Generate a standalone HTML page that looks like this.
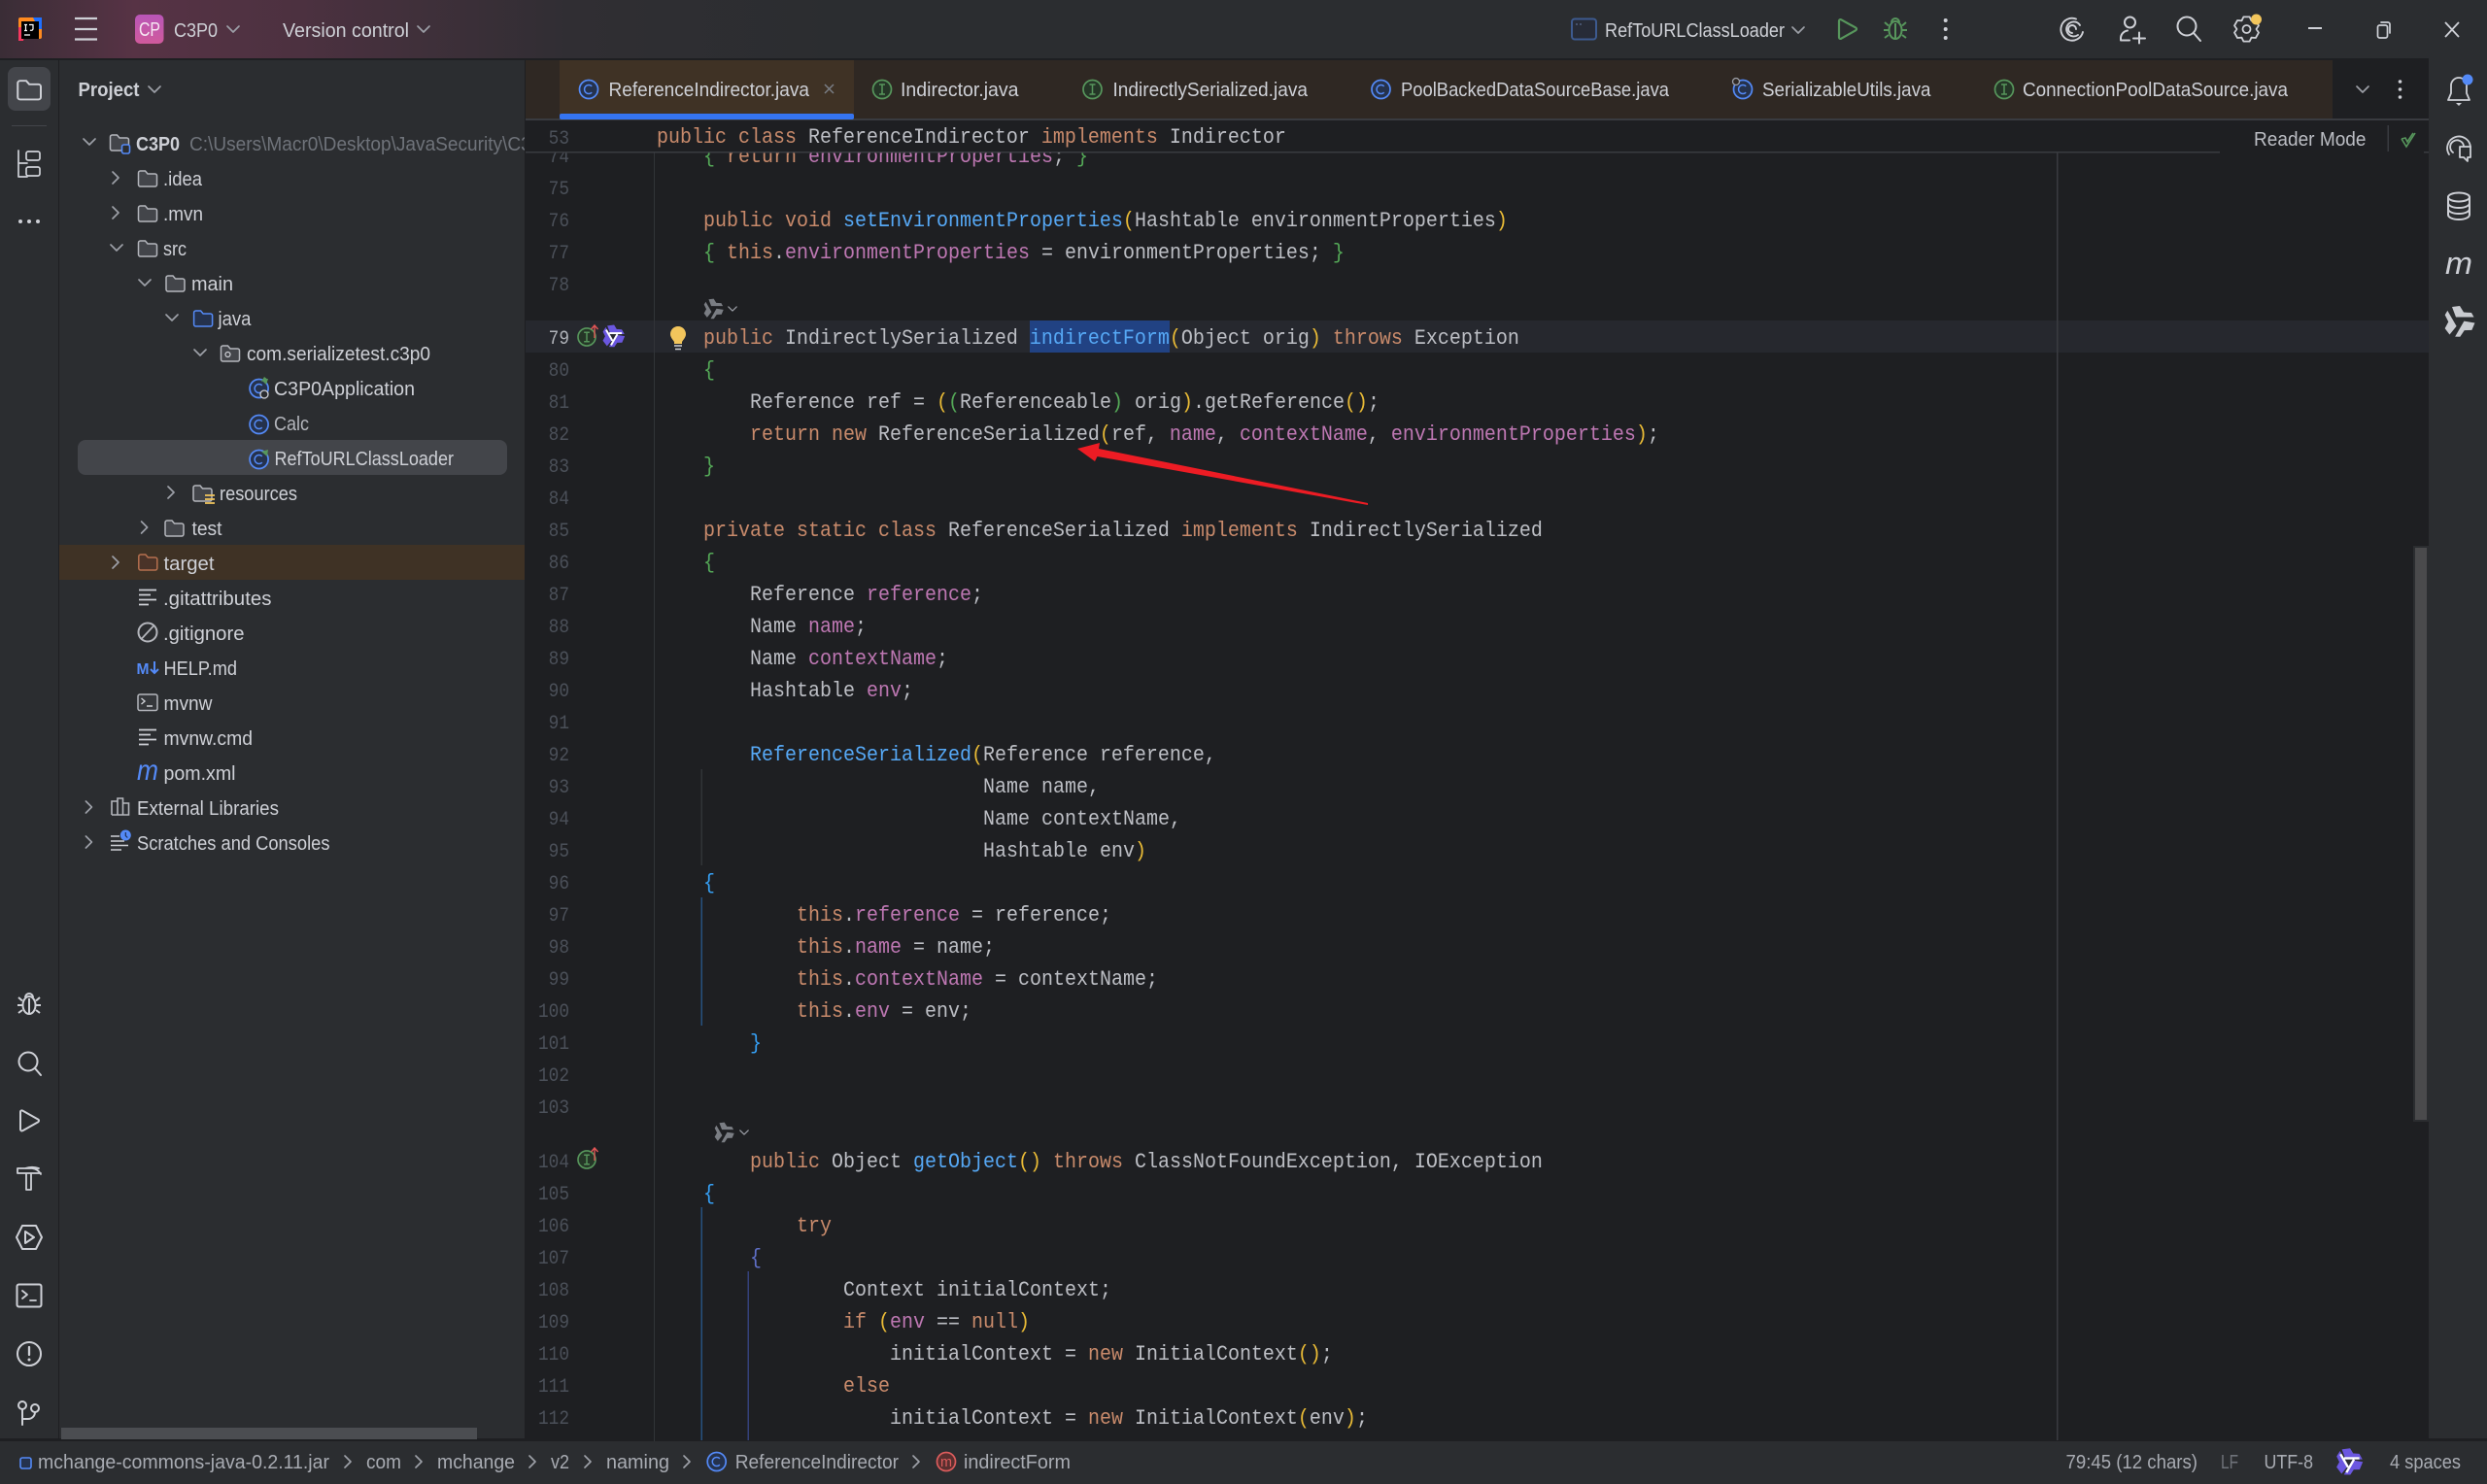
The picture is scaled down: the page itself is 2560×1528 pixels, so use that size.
<!DOCTYPE html>
<html><head><meta charset="utf-8"><title>C3P0</title>
<style>
html,body{margin:0;padding:0;background:#1e1f22;width:2560px;height:1528px;overflow:hidden}
svg{display:block;position:absolute;left:0;top:0}
text{white-space:pre}
.u{font:20px "Liberation Sans",sans-serif;fill:#ced0d6}
.b{font-weight:bold}
.d{fill:#a8abb2}
.c{font:22px "Liberation Mono",monospace;fill:#bcbec4}
.n{font:20px "Liberation Mono",monospace;fill:#4b5059;text-anchor:end}
.k{fill:#c88a6b}.f{fill:#bd77b2}.m{fill:#56a8f5}.y{fill:#e8ba36}.g{fill:#54a857}.l{fill:#359ff4}.p{fill:#5f6fc7}
.s{fill:none;stroke:#ced0d6;stroke-width:2;stroke-linecap:round;stroke-linejoin:round}
.ch{fill:none;stroke:#9da0a8;stroke-width:1.7;stroke-linecap:round;stroke-linejoin:round}
</style></head><body>
<svg width="2560" height="1528" viewBox="0 0 2560 1528" xmlns="http://www.w3.org/2000/svg">
<defs>
<linearGradient id="tg" x1="0" x2="1" y1="0" y2="0"><stop offset="0" stop-color="#3a2d36"/><stop offset=".16" stop-color="#573345"/><stop offset=".36" stop-color="#4c3140"/><stop offset=".68" stop-color="#302e33"/><stop offset="1" stop-color="#2b2d30"/></linearGradient>
<linearGradient id="cp" x1="0" x2="0" y1="0" y2="1"><stop offset="0" stop-color="#b956b8"/><stop offset="1" stop-color="#d05a9c"/></linearGradient>
<clipPath id="pc"><rect x="60" y="120" width="480" height="60"/></clipPath>
<clipPath id="ed"><rect x="541" y="157" width="1959" height="1327"/></clipPath>
<path id="fo" d="M1 3a2 2 0 0 1 2-2h5l2.500 3H18a2 2 0 0 1 2 2v9a2 2 0 0 1-2 2H3a2 2 0 0 1-2-2z"/>
<g id="cl"><circle r="9.500" fill="#25324d" stroke="#548af7" stroke-width="1.700"/><path d="M3.200-3.200a4.500 4.500 0 1 0 0 6.400" fill="none" stroke="#548af7" stroke-width="1.500"/></g>
<g id="if"><circle r="9.500" fill="#253627" stroke="#57965c" stroke-width="1.700"/><path d="M-3-5h6M-3 5h6M0-5v10" fill="none" stroke="#57965c" stroke-width="1.500"/></g>
<path id="dn" d="M-6-3L0 3L6-3"/>
<path id="rt" d="M-3-6L3 0L-3 6"/>
<path id="ar" d="M-7-15L1-16L5-9.500L13-9L15.500-4.500L-3-4.500Z"/>
<g id="st"><use href="#ar"/><use href="#ar" transform="rotate(120)"/><use href="#ar" transform="rotate(240)"/></g>
<path id="al" d="M-6-4.500H14"/>
<g id="sl"><use href="#al"/><use href="#al" transform="rotate(120)"/><use href="#al" transform="rotate(240)"/></g>
<g id="bug"><ellipse cx="0" cy="2" rx="6.500" ry="9"/><path d="M-4-6a4 4 0 0 1 8 0M-11-6l4 3.500M11-6l-4 3.500M-12 2h5M12 2h-5M-11 10l4-3M11 10l-4-3M0-5v16"/></g>
<g id="lines"><path d="M-9-7.500H9M-9-2.500H3M-9 2.500H9M-9 7.500H1" fill="none" stroke="#ced0d6" stroke-width="1.800"/></g>
</defs>

<!-- base panels -->
<rect width="2560" height="1528" fill="#1e1f22"/>
<rect width="2560" height="60" fill="#2b2d30"/>
<rect width="860" height="60" fill="url(#tg)"/>
<rect y="60" width="2560" height="2" fill="#1e1f22"/>
<rect y="62" width="60" height="1422" fill="#2b2d30"/>
<rect x="61" y="62" width="479" height="1422" fill="#2b2d30"/>
<rect x="60" y="60" width="1" height="1424" fill="#1e1f22"/>
<rect x="540" y="60" width="1" height="1424" fill="#1e1f22"/>
<rect x="2500" y="60" width="60" height="1424" fill="#2b2d30"/>
<rect y="1481" width="2560" height="3" fill="#1e1f22"/>
<rect y="1484" width="2560" height="44" fill="#2b2d30"/>

<!-- title bar -->
<rect x="19" y="18" width="24" height="22" rx="2" fill="#ff8a1f"/>
<path d="M34 18h9v12h-3z" fill="#1f6fff"/>
<path d="M19 28h8l-3 14h-5z" fill="#f5385f"/>
<rect x="22" y="22" width="18" height="18" fill="#000"/>
<path d="M25 25.500h3M26.500 25.500v6M25 31.500h3M30 25.500h4v4.500a2 2 0 0 1-3 1M25 36h6" fill="none" stroke="#fff" stroke-width="1.200"/>
<path d="M77 19h23M77 30h23M77 40.500h23" stroke="#ced0d6" stroke-width="2.200"/>
<rect x="139" y="15" width="29.500" height="30" rx="5" fill="url(#cp)"/>
<text class="u" x="143" y="37" textLength="22" lengthAdjust="spacingAndGlyphs" style="fill:#f6e6f2;font-size:20px">CP</text>
<text class="u" x="179" y="38" textLength="45" lengthAdjust="spacingAndGlyphs">C3P0</text>
<use href="#dn" x="240" y="30" class="ch"/>
<text class="u" x="291" y="38" textLength="130" lengthAdjust="spacingAndGlyphs">Version control</text>
<use href="#dn" x="436" y="30" class="ch"/>
<rect x="1618" y="19.500" width="25" height="21" rx="3" fill="#272b37" stroke="#3d5a8f" stroke-width="2"/>
<path d="M1622 25h2M1626 25h2" stroke="#5a6a8f" stroke-width="1.200"/>
<text class="u" x="1652" y="38" textLength="185" lengthAdjust="spacingAndGlyphs">RefToURLClassLoader</text>
<use href="#dn" x="1851" y="31" class="ch"/>
<path d="M1893 21.500v17a1.500 1.500 0 0 0 2.300 1.200l15-8.500a1.500 1.500 0 0 0 0-2.600l-15-8.300a1.500 1.500 0 0 0-2.300 1.200z" fill="none" stroke="#57965c" stroke-width="2.200"/>
<use href="#bug" x="1951" y="29" fill="none" stroke="#57965c" stroke-width="2"/>
<g fill="#ced0d6"><circle cx="2002.700" cy="21" r="2"/><circle cx="2002.700" cy="30" r="2"/><circle cx="2002.700" cy="39" r="2"/></g>
<path d="M2137 19.500A11.500 11.500 0 1 0 2144 33M2141 26A7.500 7.500 0 1 0 2139 36M2137 30a4 4 0 1 0-4 4" class="s" style="stroke-width:1.900"/>
<circle cx="2192.500" cy="23" r="5.500" class="s"/>
<path d="M2183 41.500v-2a8 8 0 0 1 7-8M2183 41.500h9M2202 33.500v11M2196 39.500h12" class="s"/>
<circle cx="2251" cy="27" r="9.500" class="s"/><path d="M2258 34l7 8" class="s"/>
<polygon transform="translate(2312.500,30)" points="-3.100,-12.600 3.100,-12.600 5,-8.700 9.400,-9 12.500,-3.600 10,0 12.500,3.600 9.400,9 5,8.700 3.100,12.600 -3.100,12.600 -5,8.700 -9.400,9 -12.500,3.600 -10,0 -12.500,-3.600 -9.400,-9 -5,-8.700" class="s" style="stroke-width:1.800"/><circle cx="2312.500" cy="30" r="4" class="s" style="stroke-width:1.800"/>
<circle cx="2322.500" cy="20" r="5.500" fill="#f2c55c"/>
<path d="M2376 29h14" stroke="#ced0d6" stroke-width="2"/>
<rect x="2447.500" y="26" width="10" height="13" rx="2" class="s" style="stroke-width:1.700"/><path d="M2451 23h7a2 2 0 0 1 2 2v9" class="s" style="stroke-width:1.700"/>
<path d="M2517 23l14 15M2531 23l-14 15" stroke="#ced0d6" stroke-width="1.800"/>

<!-- left bar -->
<rect x="8" y="69" width="44" height="45" rx="8" fill="#43454a"/>
<use href="#fo" x="0" y="0" transform="translate(17,82) scale(1.250,1.200)" fill="none" stroke="#ced0d6" stroke-width="1.600"/>
<rect x="12" y="129" width="36" height="1" fill="#43454a"/>
<path d="M19 155v27h9M19 168h9" class="s" style="stroke-width:1.700"/><rect x="27" y="156" width="14" height="9" rx="2" class="s" style="stroke-width:1.700"/><rect x="27" y="172" width="14" height="9" rx="2" class="s" style="stroke-width:1.700"/>
<g fill="#ced0d6"><circle cx="21" cy="228" r="2"/><circle cx="30" cy="228" r="2"/><circle cx="39" cy="228" r="2"/></g>
<use href="#bug" x="30" y="1033" fill="none" stroke="#ced0d6" stroke-width="2"/>
<circle cx="29" cy="1093" r="9.500" class="s"/><path d="M36 1100l6 7" class="s"/>
<path d="M21 1145v18a1.500 1.500 0 0 0 2.300 1.200l16-9a1.500 1.500 0 0 0 0-2.600l-16-9a1.500 1.500 0 0 0-2.300 1.200z" class="s"/>
<path d="M18 1203h22a16 12 0 0 0-14 0M18 1203v5h24M27 1208v17h5v-17M33 1203a12 10 0 0 1 9 6" class="s" style="stroke-width:1.800"/>
<path d="M23 1262h14l6 12-6 12H23l-6-12z" class="s"/><path d="M26 1268v12l9-6z" class="s"/>
<rect x="17.500" y="1322.500" width="25" height="23" rx="2" class="s"/><path d="M23 1329l5 4-5 4M31 1339h6" class="s" style="stroke-width:1.800"/>
<circle cx="30" cy="1394" r="12" class="s"/><path d="M30 1387v8" class="s" style="stroke-width:2.300"/><circle cx="30" cy="1400" r="1.500" fill="#ced0d6"/>
<circle cx="23" cy="1447" r="4" class="s"/><circle cx="36" cy="1450" r="4" class="s"/><path d="M23 1451v16M23 1461h6a7 7 0 0 0 7-7" class="s"/>

<!-- project panel -->
<text class="u b" x="80.500" y="99" textLength="63" lengthAdjust="spacingAndGlyphs">Project</text>
<use href="#dn" x="159" y="92" class="ch"/>
<rect x="61" y="561" width="479" height="36" fill="#3f3225"/>
<rect x="80" y="453" width="442" height="36" rx="8" fill="#43454a"/>
<g class="ch">
<use href="#dn" x="92" y="146"/><use href="#rt" x="119" y="183"/><use href="#rt" x="119" y="219"/><use href="#dn" x="120" y="255"/><use href="#dn" x="149" y="291"/><use href="#dn" x="177" y="327"/><use href="#dn" x="206" y="363"/><use href="#rt" x="176" y="507"/><use href="#rt" x="148.600" y="543"/><use href="#rt" x="119" y="579"/><use href="#rt" x="91.400" y="831"/><use href="#rt" x="91.400" y="867"/>
</g>
<g fill="#43454a" stroke="#b4b6bc" stroke-width="1.500">
<use href="#fo" x="112.500" y="138"/><use href="#fo" x="141.500" y="175"/><use href="#fo" x="141.500" y="211"/><use href="#fo" x="141.500" y="247"/><use href="#fo" x="170" y="283"/><use href="#fo" x="226.500" y="355"/><use href="#fo" x="198" y="499"/><use href="#fo" x="169" y="535"/>
</g>
<use href="#fo" x="198.600" y="319" fill="#25324d" stroke="#548af7" stroke-width="1.500"/>
<use href="#fo" x="141.800" y="570" fill="#4a3328" stroke="#b5704f" stroke-width="1.500"/>
<rect x="125.500" y="149" width="8" height="9" rx="2" fill="#2b2d30" stroke="#548af7" stroke-width="1.600"/>
<circle cx="234.500" cy="365" r="2.500" fill="none" stroke="#ced0d6" stroke-width="1.200"/>
<path d="M211 510h10M211 514h10M211 518h10" stroke="#f2c55c" stroke-width="1.800"/>
<text class="u b" x="140" y="155" textLength="45" lengthAdjust="spacingAndGlyphs">C3P0</text>
<g clip-path="url(#pc)"><text class="u" x="195" y="155" textLength="375" lengthAdjust="spacingAndGlyphs" style="fill:#6f737a">C:\Users\Macr0\Desktop\JavaSecurity\C3P0</text></g>
<text class="u" x="168" y="191" textLength="40" lengthAdjust="spacingAndGlyphs">.idea</text>
<text class="u" x="168" y="227" textLength="41" lengthAdjust="spacingAndGlyphs">.mvn</text>
<text class="u" x="168" y="263" textLength="24" lengthAdjust="spacingAndGlyphs">src</text>
<text class="u" x="197" y="299" textLength="43" lengthAdjust="spacingAndGlyphs">main</text>
<text class="u" x="224.500" y="335" textLength="34" lengthAdjust="spacingAndGlyphs">java</text>
<text class="u" x="254" y="371" textLength="189" lengthAdjust="spacingAndGlyphs">com.serializetest.c3p0</text>
<use href="#cl" x="266.600" y="400"/><path d="M269 393l3-5 4 3z M269 391l7-1-2 6z" fill="#57965c"/><circle cx="272" cy="406" r="4" fill="#2b2d30" stroke="#ced0d6" stroke-width="1.300"/>
<text class="u" x="282" y="407" textLength="145" lengthAdjust="spacingAndGlyphs">C3P0Application</text>
<use href="#cl" x="266.600" y="437"/>
<text class="u" x="282" y="443" textLength="36" lengthAdjust="spacingAndGlyphs" style="fill:#b4b6bc">Calc</text>
<use href="#cl" x="266.600" y="473"/><path d="M269 465l7-2-1 7z" fill="#57965c"/>
<text class="u" x="282.500" y="479" textLength="184.500" lengthAdjust="spacingAndGlyphs">RefToURLClassLoader</text>
<text class="u" x="226" y="515" textLength="80" lengthAdjust="spacingAndGlyphs">resources</text>
<text class="u" x="197.500" y="551" textLength="31" lengthAdjust="spacingAndGlyphs">test</text>
<text class="u" x="168.500" y="587" textLength="52" lengthAdjust="spacingAndGlyphs">target</text>
<use href="#lines" x="152" y="615"/>
<text class="u" x="168" y="623" textLength="111.500" lengthAdjust="spacingAndGlyphs">.gitattributes</text>
<circle cx="152" cy="651" r="9.500" class="s" style="stroke:#b4b6bc"/><path d="M145.500 658l13-14" class="s" style="stroke:#b4b6bc;stroke-width:1.700"/>
<text class="u" x="168" y="659" textLength="83.500" lengthAdjust="spacingAndGlyphs">.gitignore</text>
<text class="u b" x="140.500" y="694" textLength="13" lengthAdjust="spacingAndGlyphs" style="fill:#548af7;font-size:16px">M</text>
<path d="M159 681v12M155 689l4 4 4-4" fill="none" stroke="#548af7" stroke-width="2"/>
<text class="u" x="168.500" y="695" textLength="75.500" lengthAdjust="spacingAndGlyphs">HELP.md</text>
<rect x="142" y="715" width="20" height="16.500" rx="2" fill="#35373b" stroke="#b4b6bc" stroke-width="1.500"/><path d="M145.500 719l3.500 3-3.500 3M151 727h6" fill="none" stroke="#ced0d6" stroke-width="1.400"/>
<text class="u" x="168.500" y="731" textLength="50" lengthAdjust="spacingAndGlyphs">mvnw</text>
<use href="#lines" x="152" y="759"/>
<text class="u" x="168.500" y="767" textLength="91.500" lengthAdjust="spacingAndGlyphs">mvnw.cmd</text>
<text x="141" y="803" textLength="22" lengthAdjust="spacingAndGlyphs" style="font:italic 30px 'Liberation Sans',sans-serif;fill:#548af7">m</text>
<text class="u" x="168.500" y="803" textLength="74" lengthAdjust="spacingAndGlyphs">pom.xml</text>
<path d="M115 839v-14h6v14M121 839v-17h5.500v17M126.500 839v-12h6v12zM115 839h17" fill="none" stroke="#b4b6bc" stroke-width="1.600"/>
<text class="u" x="141" y="839" textLength="146" lengthAdjust="spacingAndGlyphs">External Libraries</text>
<path d="M114 861h9M114 866h14M114 870.500h18M114 875h11" fill="none" stroke="#ced0d6" stroke-width="1.600"/><circle cx="129.300" cy="860" r="5.500" fill="#548af7"/><path d="M129.300 857v3.500l2 2" fill="none" stroke="#1e2f55" stroke-width="1.200"/>
<text class="u" x="141" y="875" textLength="198.500" lengthAdjust="spacingAndGlyphs">Scratches and Consoles</text>
<rect x="63" y="1470" width="428" height="12" fill="#4b4d51"/>

<!-- tabs -->
<rect x="541" y="62" width="1860" height="60" fill="#2f2823"/>
<rect x="576" y="62" width="303" height="60" fill="#3f3225"/>
<rect x="541" y="122" width="1959" height="2" fill="#393b40"/>
<rect x="576" y="117" width="303" height="6" rx="2" fill="#3574f0"/>
<use href="#cl" x="606" y="92"/>
<text class="u" x="626.500" y="99" textLength="206.500" lengthAdjust="spacingAndGlyphs">ReferenceIndirector.java</text>
<path d="M849 87l9 9M858 87l-9 9" stroke="#7a7e85" stroke-width="1.500"/>
<use href="#if" x="908" y="92"/>
<text class="u" x="927" y="99" textLength="121.500" lengthAdjust="spacingAndGlyphs">Indirector.java</text>
<use href="#if" x="1124.500" y="92"/>
<text class="u" x="1145.500" y="99" textLength="200.500" lengthAdjust="spacingAndGlyphs">IndirectlySerialized.java</text>
<use href="#cl" x="1421.500" y="92"/>
<text class="u" x="1442" y="99" textLength="276" lengthAdjust="spacingAndGlyphs">PoolBackedDataSourceBase.java</text>
<use href="#cl" x="1794" y="92"/><circle cx="1787" cy="84" r="3.500" fill="#2f2823" stroke="#9da0a8" stroke-width="1.300"/>
<text class="u" x="1814" y="99" textLength="173.500" lengthAdjust="spacingAndGlyphs">SerializableUtils.java</text>
<use href="#if" x="2063" y="92"/>
<text class="u" x="2082" y="99" textLength="273" lengthAdjust="spacingAndGlyphs">ConnectionPoolDataSource.java</text>
<use href="#dn" x="2432" y="92" class="ch"/>
<g fill="#ced0d6"><circle cx="2470.500" cy="84" r="1.800"/><circle cx="2470.500" cy="92" r="1.800"/><circle cx="2470.500" cy="100" r="1.800"/></g>

<!-- editor backgrounds & guides -->
<rect x="541" y="330" width="1959" height="33" fill="#26282e"/>
<rect x="673" y="124" width="1" height="1360" fill="#313438"/>
<rect x="2117" y="157" width="1.500" height="1326" fill="#393b40"/>
<rect x="1060" y="330" width="144" height="33" fill="#214283"/>
<rect x="721.500" y="792" width="1.500" height="99" fill="#313438"/>
<rect x="721.500" y="924" width="1.500" height="132" fill="#27527f"/>
<rect x="721.500" y="1243" width="1.500" height="240" fill="#27527f"/>
<rect x="769.500" y="1309" width="1.500" height="174" fill="#34407a"/>

<!-- line numbers -->
<g clip-path="url(#ed)">
<text class="n" transform="translate(586,167) scale(.889 1)">74</text>
<text class="c" transform="translate(724,167) scale(.90909 1)"><tspan class="g">{</tspan> <tspan class="k">return</tspan> <tspan class="f">environmentProperties</tspan>; <tspan class="g">}</tspan></text>
</g>
<text class="n" transform="translate(586,200) scale(.889 1)">75</text>
<text class="n" transform="translate(586,233) scale(.889 1)">76</text>
<text class="n" transform="translate(586,266) scale(.889 1)">77</text>
<text class="n" transform="translate(586,299) scale(.889 1)">78</text>
<text class="n" transform="translate(586,354) scale(.889 1)" style="fill:#b0b3b9">79</text>
<text class="n" transform="translate(586,387) scale(.889 1)">80</text>
<text class="n" transform="translate(586,420) scale(.889 1)">81</text>
<text class="n" transform="translate(586,453) scale(.889 1)">82</text>
<text class="n" transform="translate(586,486) scale(.889 1)">83</text>
<text class="n" transform="translate(586,519) scale(.889 1)">84</text>
<text class="n" transform="translate(586,552) scale(.889 1)">85</text>
<text class="n" transform="translate(586,585) scale(.889 1)">86</text>
<text class="n" transform="translate(586,618) scale(.889 1)">87</text>
<text class="n" transform="translate(586,651) scale(.889 1)">88</text>
<text class="n" transform="translate(586,684) scale(.889 1)">89</text>
<text class="n" transform="translate(586,717) scale(.889 1)">90</text>
<text class="n" transform="translate(586,750) scale(.889 1)">91</text>
<text class="n" transform="translate(586,783) scale(.889 1)">92</text>
<text class="n" transform="translate(586,816) scale(.889 1)">93</text>
<text class="n" transform="translate(586,849) scale(.889 1)">94</text>
<text class="n" transform="translate(586,882) scale(.889 1)">95</text>
<text class="n" transform="translate(586,915) scale(.889 1)">96</text>
<text class="n" transform="translate(586,948) scale(.889 1)">97</text>
<text class="n" transform="translate(586,981) scale(.889 1)">98</text>
<text class="n" transform="translate(586,1014) scale(.889 1)">99</text>
<text class="n" transform="translate(586,1047) scale(.889 1)">100</text>
<text class="n" transform="translate(586,1080) scale(.889 1)">101</text>
<text class="n" transform="translate(586,1113) scale(.889 1)">102</text>
<text class="n" transform="translate(586,1146) scale(.889 1)">103</text>
<text class="n" transform="translate(586,1202) scale(.889 1)">104</text>
<text class="n" transform="translate(586,1235) scale(.889 1)">105</text>
<text class="n" transform="translate(586,1268) scale(.889 1)">106</text>
<text class="n" transform="translate(586,1301) scale(.889 1)">107</text>
<text class="n" transform="translate(586,1334) scale(.889 1)">108</text>
<text class="n" transform="translate(586,1367) scale(.889 1)">109</text>
<text class="n" transform="translate(586,1400) scale(.889 1)">110</text>
<text class="n" transform="translate(586,1433) scale(.889 1)">111</text>
<text class="n" transform="translate(586,1466) scale(.889 1)">112</text>

<!-- sticky line -->
<rect x="541" y="124" width="1959" height="32" fill="#1e1f22"/>
<rect x="541" y="156" width="1744" height="1.500" fill="#393b40"/>
<rect x="2495" y="156" width="5" height="1.500" fill="#393b40"/>
<text class="n" transform="translate(586,148) scale(.889 1)">53</text>
<text class="c" transform="translate(676,147) scale(.90909 1)"><tspan class="k">public class</tspan> ReferenceIndirector <tspan class="k">implements</tspan> Indirector</text>
<text class="u" x="2320" y="150" textLength="115.500" lengthAdjust="spacingAndGlyphs" style="fill:#bcbec4">Reader Mode</text>
<rect x="2457.500" y="129" width="1.500" height="27" fill="#393b40"/>
<path d="M2472 143l5 8 9-14M2472 143l4-1 2 4 6-9" fill="none" stroke="#57965c" stroke-width="1.600"/>

<!-- code -->
<text class="c" transform="translate(724,233) scale(.90909 1)"><tspan class="k">public void</tspan> <tspan class="m">setEnvironmentProperties</tspan><tspan class="y">(</tspan>Hashtable environmentProperties<tspan class="y">)</tspan></text>
<text class="c" transform="translate(724,266) scale(.90909 1)"><tspan class="g">{</tspan> <tspan class="k">this</tspan>.<tspan class="f">environmentProperties</tspan> = environmentProperties; <tspan class="g">}</tspan></text>
<text class="c" transform="translate(724,354) scale(.90909 1)"><tspan class="k">public</tspan> IndirectlySerialized <tspan class="m">indirectForm</tspan><tspan class="y">(</tspan>Object orig<tspan class="y">)</tspan> <tspan class="k">throws</tspan> Exception</text>
<text class="c g" transform="translate(724,387) scale(.90909 1)">{</text>
<text class="c" transform="translate(772,420) scale(.90909 1)">Reference ref = <tspan class="y">(</tspan><tspan class="g">(</tspan>Referenceable<tspan class="g">)</tspan> orig<tspan class="y">)</tspan>.getReference<tspan class="y">()</tspan>;</text>
<text class="c" transform="translate(772,453) scale(.90909 1)"><tspan class="k">return new</tspan> ReferenceSerialized<tspan class="y">(</tspan>ref, <tspan class="f">name</tspan>, <tspan class="f">contextName</tspan>, <tspan class="f">environmentProperties</tspan><tspan class="y">)</tspan>;</text>
<text class="c g" transform="translate(724,486) scale(.90909 1)">}</text>
<text class="c" transform="translate(724,552) scale(.90909 1)"><tspan class="k">private static class</tspan> ReferenceSerialized <tspan class="k">implements</tspan> IndirectlySerialized</text>
<text class="c g" transform="translate(724,585) scale(.90909 1)">{</text>
<text class="c" transform="translate(772,618) scale(.90909 1)">Reference <tspan class="f">reference</tspan>;</text>
<text class="c" transform="translate(772,651) scale(.90909 1)">Name <tspan class="f">name</tspan>;</text>
<text class="c" transform="translate(772,684) scale(.90909 1)">Name <tspan class="f">contextName</tspan>;</text>
<text class="c" transform="translate(772,717) scale(.90909 1)">Hashtable <tspan class="f">env</tspan>;</text>
<text class="c" transform="translate(772,783) scale(.90909 1)"><tspan class="m">ReferenceSerialized</tspan><tspan class="y">(</tspan>Reference reference,</text>
<text class="c" transform="translate(1012,816) scale(.90909 1)">Name name,</text>
<text class="c" transform="translate(1012,849) scale(.90909 1)">Name contextName,</text>
<text class="c" transform="translate(1012,882) scale(.90909 1)">Hashtable env<tspan class="y">)</tspan></text>
<text class="c l" transform="translate(724,915) scale(.90909 1)">{</text>
<text class="c" transform="translate(820,948) scale(.90909 1)"><tspan class="k">this</tspan>.<tspan class="f">reference</tspan> = reference;</text>
<text class="c" transform="translate(820,981) scale(.90909 1)"><tspan class="k">this</tspan>.<tspan class="f">name</tspan> = name;</text>
<text class="c" transform="translate(820,1014) scale(.90909 1)"><tspan class="k">this</tspan>.<tspan class="f">contextName</tspan> = contextName;</text>
<text class="c" transform="translate(820,1047) scale(.90909 1)"><tspan class="k">this</tspan>.<tspan class="f">env</tspan> = env;</text>
<text class="c l" transform="translate(772,1080) scale(.90909 1)">}</text>
<text class="c" transform="translate(772,1202) scale(.90909 1)"><tspan class="k">public</tspan> Object <tspan class="m">getObject</tspan><tspan class="y">()</tspan> <tspan class="k">throws</tspan> ClassNotFoundException, IOException</text>
<text class="c l" transform="translate(724,1235) scale(.90909 1)">{</text>
<text class="c k" transform="translate(820,1268) scale(.90909 1)">try</text>
<text class="c p" transform="translate(772,1301) scale(.90909 1)">{</text>
<text class="c" transform="translate(868,1334) scale(.90909 1)">Context initialContext;</text>
<text class="c" transform="translate(868,1367) scale(.90909 1)"><tspan class="k">if</tspan> <tspan class="y">(</tspan><tspan class="f">env</tspan> == <tspan class="k">null</tspan><tspan class="y">)</tspan></text>
<text class="c" transform="translate(916,1400) scale(.90909 1)">initialContext = <tspan class="k">new</tspan> InitialContext<tspan class="y">()</tspan>;</text>
<text class="c k" transform="translate(868,1433) scale(.90909 1)">else</text>
<text class="c" transform="translate(916,1466) scale(.90909 1)">initialContext = <tspan class="k">new</tspan> InitialContext<tspan class="y">(</tspan>env<tspan class="y">)</tspan>;</text>

<!-- gutter icons and inlays -->
<g transform="translate(604,347) scale(.95)"><use href="#if"/></g><path d="M612 348v-13M608.500 339l3.500-4 3.500 4" fill="none" stroke="#e05555" stroke-width="1.400"/>
<g transform="translate(631,346) scale(.65)"><use href="#st" fill="#6b57e0" stroke="#6b57e0" stroke-width="3"/><use href="#sl" fill="none" stroke="#fff" stroke-width="3"/></g>
<path d="M698 336c-5 0-8 4-8 8 0 3 2 5 4 8v2h8v-2c2-3 4-5 4-8 0-4-3-8-8-8z" fill="#f2c55c"/><path d="M694 356h8M695 359.500h6" stroke="#ced0d6" stroke-width="1.600"/>
<g transform="translate(604,1194) scale(.95)"><use href="#if"/></g><path d="M612 1195v-13M608.500 1186l3.500-4 3.500 4" fill="none" stroke="#e05555" stroke-width="1.400"/>
<g transform="translate(734,318) scale(.65)"><use href="#st" fill="#7a7d83"/></g>
<use href="#dn" transform="translate(754,318) scale(.7)" class="ch"/>
<g transform="translate(745,1166) scale(.65)"><use href="#st" fill="#7a7d83"/></g>
<use href="#dn" transform="translate(766,1166) scale(.7)" class="ch"/>

<!-- red arrow -->
<polygon points="1109,462 1132,456 1131,462 1408,518 1408,520 1129.500,470 1127,475" fill="#ed1c24"/>

<!-- scrollbar -->
<rect x="2484" y="562" width="16" height="593" fill="#2b2d30"/>
<rect x="2486" y="564" width="12" height="589" fill="#4a4a4c"/>

<!-- right bar -->
<path d="M2531 80a8 8 0 0 0-8 8v8l-3 7h22l-3-7v-8a8 8 0 0 0-8-8z" class="s" style="stroke-width:1.800"/><path d="M2528 106l3 3 3-3z" fill="#ced0d6"/>
<circle cx="2540" cy="82" r="5.500" fill="#548af7"/>
<path d="M2521 159a12 12 0 1 1 22-8M2525 157a7 7 0 1 1 11-7" class="s" style="stroke-width:1.800"/><path d="M2532 151h11v11h-3v4l-4-4h-4z" class="s" style="stroke-width:1.800"/>
<ellipse cx="2531" cy="203" rx="11" ry="4.500" class="s"/><path d="M2520 203v18c0 3 5 5 11 5s11-2 11-5v-18M2520 209c0 3 5 5 11 5s11-2 11-5M2520 215c0 3 5 5 11 5s11-2 11-5" class="s"/>
<text x="2517" y="282" textLength="28" lengthAdjust="spacingAndGlyphs" style="font:italic 32px 'Liberation Sans',sans-serif;fill:#ced0d6">m</text>
<g transform="translate(2531,331)"><use href="#st" fill="#c9cbd0"/></g>

<!-- status bar -->
<rect x="21" y="1501" width="11" height="11" rx="2" fill="#25324d" stroke="#548af7" stroke-width="1.600"/>
<text class="u d" x="39" y="1512" textLength="300" lengthAdjust="spacingAndGlyphs">mchange-commons-java-0.2.11.jar</text>
<g class="ch"><use href="#rt" x="358" y="1505"/><use href="#rt" x="431" y="1505"/><use href="#rt" x="548" y="1505"/><use href="#rt" x="605" y="1505"/><use href="#rt" x="707" y="1505"/><use href="#rt" x="943" y="1505"/></g>
<text class="u d" x="377" y="1512" textLength="36" lengthAdjust="spacingAndGlyphs">com</text>
<text class="u d" x="450" y="1512" textLength="80" lengthAdjust="spacingAndGlyphs">mchange</text>
<text class="u d" x="567" y="1512" textLength="19" lengthAdjust="spacingAndGlyphs">v2</text>
<text class="u d" x="624" y="1512" textLength="65" lengthAdjust="spacingAndGlyphs">naming</text>
<use href="#cl" x="737.700" y="1505"/>
<text class="u d" x="756.700" y="1512" textLength="168.300" lengthAdjust="spacingAndGlyphs">ReferenceIndirector</text>
<circle cx="974" cy="1505" r="9.500" fill="#5a2f2f" stroke="#db5c5c" stroke-width="1.700"/>
<text x="968" y="1510" textLength="12" lengthAdjust="spacingAndGlyphs" style="font:15px 'Liberation Sans',sans-serif;fill:#db5c5c">m</text>
<text class="u d" x="992" y="1512" textLength="110" lengthAdjust="spacingAndGlyphs">indirectForm</text>
<text class="u d" x="2126.500" y="1512" textLength="135.500" lengthAdjust="spacingAndGlyphs">79:45 (12 chars)</text>
<text class="u" x="2286" y="1512" textLength="18" lengthAdjust="spacingAndGlyphs" style="fill:#6f737a">LF</text>
<text class="u d" x="2330.500" y="1512" textLength="50.500" lengthAdjust="spacingAndGlyphs">UTF-8</text>
<g transform="translate(2417.700,1505) scale(.78)"><use href="#st" fill="#6b57e0" stroke="#6b57e0" stroke-width="3"/><use href="#sl" fill="none" stroke="#fff" stroke-width="3"/></g>
<text class="u d" x="2460" y="1512" textLength="73" lengthAdjust="spacingAndGlyphs">4 spaces</text>
</svg>
</body></html>
